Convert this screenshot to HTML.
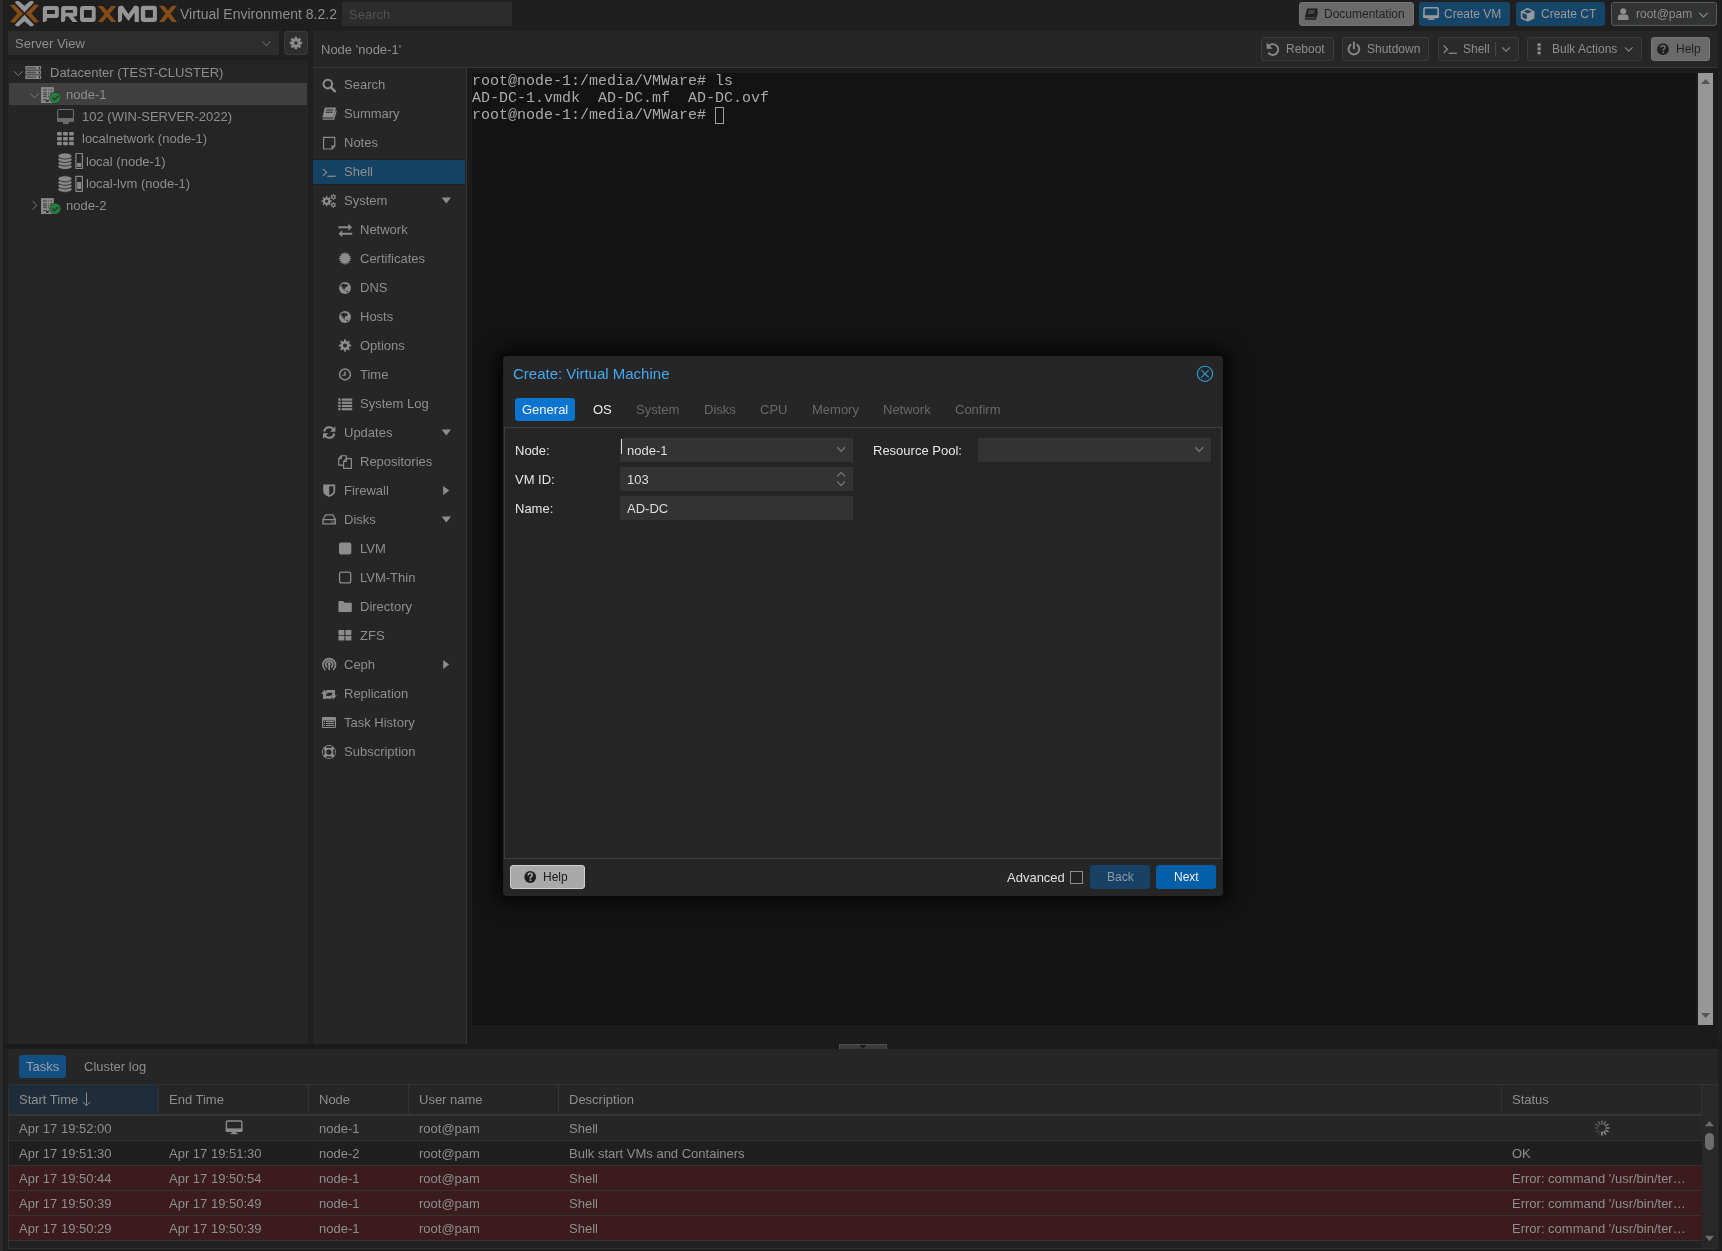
<!DOCTYPE html>
<html><head><meta charset="utf-8"><title>Proxmox</title>
<style>
*{box-sizing:border-box;margin:0;padding:0}
html,body{width:1722px;height:1251px;overflow:hidden;background:#1f1f1f;font-family:"Liberation Sans",sans-serif;font-size:13px;color:#a0a0a0}
.a{position:absolute}
.t{position:absolute;white-space:pre;line-height:15px;will-change:transform}
.s12{font-size:12px}
svg.ov{position:absolute;left:0;top:0;width:1722px;height:1251px;overflow:visible}
</style></head><body>
<div class="a" style="left:0px;top:0px;width:3px;height:1251px;background:#2a2a2a;"></div>
<div class="a" style="left:342px;top:2px;width:170px;height:24px;background:#2c2c2c;"></div>
<div class="t" style="left:349px;top:7px;color:#525252;">Search</div>
<div class="t" style="left:180px;top:6px;color:#8e8e8e;font-size:14px;line-height:16px;">Virtual Environment 8.2.2</div>
<div class="a" style="left:1299px;top:2px;width:115px;height:24px;background:#6a6a6a;border-radius:3px;border:1px solid #727272;"></div>
<div class="t" style="left:1324px;top:7px;color:#222;font-size:12px;">Documentation</div>
<div class="a" style="left:1419px;top:2px;width:91px;height:24px;background:#154569;border-radius:3px;"></div>
<div class="t" style="left:1444px;top:7px;color:#999999;font-size:12px;">Create VM</div>
<div class="a" style="left:1516px;top:2px;width:89px;height:24px;background:#154569;border-radius:3px;"></div>
<div class="t" style="left:1541px;top:7px;color:#999999;font-size:12px;">Create CT</div>
<div class="a" style="left:1611px;top:2px;width:106px;height:24px;background:#323333;border-radius:3px;border:1px solid #575b5b;"></div>
<div class="t" style="left:1636px;top:7px;color:#8e8e8e;font-size:12px;">root@pam</div>
<div class="a" style="left:8px;top:31px;width:271px;height:24px;background:#2d2d2d;"></div>
<div class="t" style="left:15px;top:36px;color:#8e8e8e;">Server View</div>
<div class="a" style="left:284px;top:31px;width:24px;height:24px;background:#2e2e2e;border:1px solid #3a3a3a;border-radius:3px;"></div>
<div class="a" style="left:8px;top:60px;width:300px;height:984px;background:#252525;"></div>
<div class="a" style="left:9px;top:83px;width:298px;height:22px;background:#404040;"></div>
<div class="t" style="left:50px;top:65px;color:#8e8e8e;">Datacenter (TEST-CLUSTER)</div>
<div class="t" style="left:66px;top:87px;color:#8e8e8e;">node-1</div>
<div class="t" style="left:82px;top:109px;color:#8e8e8e;">102 (WIN-SERVER-2022)</div>
<div class="t" style="left:82px;top:131px;color:#8e8e8e;">localnetwork (node-1)</div>
<div class="t" style="left:86px;top:154px;color:#8e8e8e;">local (node-1)</div>
<div class="t" style="left:86px;top:176px;color:#8e8e8e;">local-lvm (node-1)</div>
<div class="t" style="left:66px;top:198px;color:#8e8e8e;">node-2</div>
<div class="a" style="left:313px;top:31px;width:1405px;height:37px;background:#262626;border-bottom:1px solid #383838;"></div>
<div class="t" style="left:321px;top:42px;color:#8e8e8e;">Node 'node-1'</div>
<div class="a" style="left:1261px;top:37px;width:73px;height:24px;background:#2b2b2b;border:1px solid #3c3c3c;border-radius:3px;"></div>
<div class="t" style="left:1286px;top:42px;color:#8e8e8e;font-size:12px;">Reboot</div>
<div class="a" style="left:1342px;top:37px;width:87px;height:24px;background:#2b2b2b;border:1px solid #3c3c3c;border-radius:3px;"></div>
<div class="t" style="left:1367px;top:42px;color:#8e8e8e;font-size:12px;">Shutdown</div>
<div class="a" style="left:1438px;top:37px;width:81px;height:24px;background:#2b2b2b;border:1px solid #3c3c3c;border-radius:3px;"></div>
<div class="t" style="left:1463px;top:42px;color:#8e8e8e;font-size:12px;">Shell</div>
<div class="a" style="left:1495px;top:42px;width:1px;height:14px;background:#444;"></div>
<div class="a" style="left:1527px;top:37px;width:115px;height:24px;background:#2b2b2b;border:1px solid #3c3c3c;border-radius:3px;"></div>
<div class="t" style="left:1552px;top:42px;color:#8e8e8e;font-size:12px;">Bulk Actions</div>
<div class="a" style="left:1651px;top:37px;width:59px;height:24px;background:#6a6a6a;border:1px solid #767676;border-radius:3px;"></div>
<div class="t" style="left:1676px;top:42px;color:#222222;font-size:12px;">Help</div>
<div class="a" style="left:313px;top:68px;width:154px;height:976px;background:#262626;border-right:1px solid #353535;"></div>
<div class="a" style="left:467px;top:68px;width:1251px;height:976px;background:#1b1b1b;"></div>
<div class="a" style="left:472px;top:73px;width:1224px;height:952px;background:#131313;"></div>
<div class="a" style="left:1698px;top:73px;width:15px;height:952px;background:#979797;"></div>
<div class="a" style="left:313px;top:159px;width:152px;height:1px;background:#1f1f1f;"></div>
<div class="a" style="left:313px;top:160px;width:152px;height:24px;background:#134265;"></div>
<div class="a" style="left:313px;top:184px;width:152px;height:1px;background:#1f1f1f;"></div>
<div class="t" style="left:344px;top:77px;color:#8e8e8e;">Search</div>
<div class="t" style="left:344px;top:106px;color:#8e8e8e;">Summary</div>
<div class="t" style="left:344px;top:135px;color:#8e8e8e;">Notes</div>
<div class="t" style="left:344px;top:164px;color:#8e8e8e;">Shell</div>
<div class="t" style="left:344px;top:193px;color:#8e8e8e;">System</div>
<div class="t" style="left:360px;top:222px;color:#8e8e8e;">Network</div>
<div class="t" style="left:360px;top:251px;color:#8e8e8e;">Certificates</div>
<div class="t" style="left:360px;top:280px;color:#8e8e8e;">DNS</div>
<div class="t" style="left:360px;top:309px;color:#8e8e8e;">Hosts</div>
<div class="t" style="left:360px;top:338px;color:#8e8e8e;">Options</div>
<div class="t" style="left:360px;top:367px;color:#8e8e8e;">Time</div>
<div class="t" style="left:360px;top:396px;color:#8e8e8e;">System Log</div>
<div class="t" style="left:344px;top:425px;color:#8e8e8e;">Updates</div>
<div class="t" style="left:360px;top:454px;color:#8e8e8e;">Repositories</div>
<div class="t" style="left:344px;top:483px;color:#8e8e8e;">Firewall</div>
<div class="t" style="left:344px;top:512px;color:#8e8e8e;">Disks</div>
<div class="t" style="left:360px;top:541px;color:#8e8e8e;">LVM</div>
<div class="t" style="left:360px;top:570px;color:#8e8e8e;">LVM-Thin</div>
<div class="t" style="left:360px;top:599px;color:#8e8e8e;">Directory</div>
<div class="t" style="left:360px;top:628px;color:#8e8e8e;">ZFS</div>
<div class="t" style="left:344px;top:657px;color:#8e8e8e;">Ceph</div>
<div class="t" style="left:344px;top:686px;color:#8e8e8e;">Replication</div>
<div class="t" style="left:344px;top:715px;color:#8e8e8e;">Task History</div>
<div class="t" style="left:344px;top:744px;color:#8e8e8e;">Subscription</div>
<div class="t" style="left:472px;top:73px;font-family:'Liberation Mono',monospace;font-size:15px;line-height:17px;color:#aaaaaa">root@node-1:/media/VMWare# ls</div>
<div class="t" style="left:472px;top:90px;font-family:'Liberation Mono',monospace;font-size:15px;line-height:17px;color:#aaaaaa">AD-DC-1.vmdk  AD-DC.mf  AD-DC.ovf</div>
<div class="t" style="left:472px;top:107px;font-family:'Liberation Mono',monospace;font-size:15px;line-height:17px;color:#aaaaaa">root@node-1:/media/VMWare# </div>
<div class="a" style="left:715px;top:107px;width:9px;height:17px;background:transparent;border:1px solid #a0a0a0;"></div>
<div class="a" style="left:3px;top:1044px;width:1719px;height:5px;background:#1b1b1b;"></div>
<div class="a" style="left:8px;top:1049px;width:1710px;height:200px;background:#262626;"></div>
<div class="a" style="left:19px;top:1055px;width:47px;height:23px;background:#134f80;border-radius:3px;"></div>
<div class="t" style="left:26px;top:1059px;color:#93a0ac;">Tasks</div>
<div class="t" style="left:84px;top:1059px;color:#8e8e8e;">Cluster log</div>
<div class="a" style="left:8px;top:1084px;width:1710px;height:165px;background:#212121;border:1px solid #303030;"></div>
<div class="a" style="left:9px;top:1085px;width:1708px;height:29px;background:#262626;"></div>
<div class="a" style="left:9px;top:1085px;width:149px;height:29px;background:#1f2d3a;"></div>
<div class="a" style="left:9px;top:1114px;width:1693px;height:2px;background:#353535;"></div>
<div class="a" style="left:158px;top:1085px;width:1px;height:29px;background:#333;"></div>
<div class="a" style="left:308px;top:1085px;width:1px;height:29px;background:#333;"></div>
<div class="a" style="left:408px;top:1085px;width:1px;height:29px;background:#333;"></div>
<div class="a" style="left:558px;top:1085px;width:1px;height:29px;background:#333;"></div>
<div class="a" style="left:1501px;top:1085px;width:1px;height:29px;background:#333;"></div>
<div class="a" style="left:1701px;top:1085px;width:1px;height:29px;background:#333;"></div>
<div class="t" style="left:19px;top:1092px;color:#8e8e8e;">Start Time</div>
<div class="t" style="left:169px;top:1092px;color:#8e8e8e;">End Time</div>
<div class="t" style="left:319px;top:1092px;color:#8e8e8e;">Node</div>
<div class="t" style="left:419px;top:1092px;color:#8e8e8e;">User name</div>
<div class="t" style="left:569px;top:1092px;color:#8e8e8e;">Description</div>
<div class="t" style="left:1512px;top:1092px;color:#8e8e8e;">Status</div>
<div class="a" style="left:9px;top:1116px;width:1693px;height:24px;background:#262626;"></div>
<div class="a" style="left:9px;top:1140px;width:1693px;height:1px;background:#333;"></div>
<div class="t" style="left:19px;top:1121px;color:#8e8e8e;">Apr 17 19:52:00</div>
<div class="t" style="left:319px;top:1121px;color:#8e8e8e;">node-1</div>
<div class="t" style="left:419px;top:1121px;color:#8e8e8e;">root@pam</div>
<div class="t" style="left:569px;top:1121px;color:#8e8e8e;">Shell</div>
<div class="a" style="left:9px;top:1141px;width:1693px;height:24px;background:#1f1f1f;"></div>
<div class="a" style="left:9px;top:1165px;width:1693px;height:1px;background:#333;"></div>
<div class="t" style="left:19px;top:1146px;color:#8e8e8e;">Apr 17 19:51:30</div>
<div class="t" style="left:169px;top:1146px;color:#8e8e8e;">Apr 17 19:51:30</div>
<div class="t" style="left:319px;top:1146px;color:#8e8e8e;">node-2</div>
<div class="t" style="left:419px;top:1146px;color:#8e8e8e;">root@pam</div>
<div class="t" style="left:569px;top:1146px;color:#8e8e8e;">Bulk start VMs and Containers</div>
<div class="t" style="left:1512px;top:1146px;color:#8e8e8e;">OK</div>
<div class="a" style="left:9px;top:1166px;width:1693px;height:24px;background:#3b1b1d;"></div>
<div class="a" style="left:9px;top:1190px;width:1693px;height:1px;background:#333;"></div>
<div class="t" style="left:19px;top:1171px;color:#8e8e8e;">Apr 17 19:50:44</div>
<div class="t" style="left:169px;top:1171px;color:#8e8e8e;">Apr 17 19:50:54</div>
<div class="t" style="left:319px;top:1171px;color:#8e8e8e;">node-1</div>
<div class="t" style="left:419px;top:1171px;color:#8e8e8e;">root@pam</div>
<div class="t" style="left:569px;top:1171px;color:#8e8e8e;">Shell</div>
<div class="t" style="left:1512px;top:1171px;color:#8e8e8e;">Error: command '/usr/bin/ter…</div>
<div class="a" style="left:9px;top:1191px;width:1693px;height:24px;background:#3b1b1d;"></div>
<div class="a" style="left:9px;top:1215px;width:1693px;height:1px;background:#333;"></div>
<div class="t" style="left:19px;top:1196px;color:#8e8e8e;">Apr 17 19:50:39</div>
<div class="t" style="left:169px;top:1196px;color:#8e8e8e;">Apr 17 19:50:49</div>
<div class="t" style="left:319px;top:1196px;color:#8e8e8e;">node-1</div>
<div class="t" style="left:419px;top:1196px;color:#8e8e8e;">root@pam</div>
<div class="t" style="left:569px;top:1196px;color:#8e8e8e;">Shell</div>
<div class="t" style="left:1512px;top:1196px;color:#8e8e8e;">Error: command '/usr/bin/ter…</div>
<div class="a" style="left:9px;top:1216px;width:1693px;height:24px;background:#3b1b1d;"></div>
<div class="a" style="left:9px;top:1240px;width:1693px;height:1px;background:#333;"></div>
<div class="t" style="left:19px;top:1221px;color:#8e8e8e;">Apr 17 19:50:29</div>
<div class="t" style="left:169px;top:1221px;color:#8e8e8e;">Apr 17 19:50:39</div>
<div class="t" style="left:319px;top:1221px;color:#8e8e8e;">node-1</div>
<div class="t" style="left:419px;top:1221px;color:#8e8e8e;">root@pam</div>
<div class="t" style="left:569px;top:1221px;color:#8e8e8e;">Shell</div>
<div class="t" style="left:1512px;top:1221px;color:#8e8e8e;">Error: command '/usr/bin/ter…</div>
<div class="a" style="left:1702px;top:1085px;width:15px;height:163px;background:#282828;"></div>

<svg class="ov" viewBox="0 0 1722 1251"><polygon fill="#959595" points="14.9,2.4 16.3,1.0 18.7,1.0 24.45,5.8 30.2,1.0 32.6,1.0 34,2.4 24.45,12.5"/><polygon fill="#959595" points="14.9,24.8 16.3,26.2 18.7,26.2 24.45,21.2 30.2,26.2 32.6,26.2 34,24.8 24.45,14.8"/><polygon fill="#874b16" stroke="#1f1f1f" stroke-width="0.7" points="9.6,5.2 14.2,3.9 23.5,13.6 14.2,23.2 9.6,21.9 17,13.6"/><polygon fill="#874b16" stroke="#1f1f1f" stroke-width="0.7" points="39.3,5.2 34.7,3.9 25.4,13.6 34.7,23.2 39.3,21.9 31.9,13.6"/><path fill="#959595" fill-rule="evenodd" d="M42.8,22 L42.8,8.6 Q42.8,5.9 45.5,5.9 L56.1,5.9 Q58.8,5.9 58.8,8.6 L58.8,15.3 Q58.8,18 56.1,18 L47,18 L47,19.8 Q46.6,22 44.4,22 Z M47,9.9 L54.9,9.9 L54.9,13.9 L47,13.9 Z"/><path fill="#959595" fill-rule="evenodd" d="M61.1,22 L61.1,8.6 Q61.1,5.9 63.8,5.9 L74.5,5.9 Q77.2,5.9 77.2,8.6 L77.2,13.9 Q77.2,16.6 74.5,16.6 L73.2,16.6 L77.4,22 L72.6,22 L68.4,16.6 L65.3,16.6 L65.3,19.8 Q64.9,22 62.7,22 Z M65.3,10.1 L73,10.1 L73,12.7 L65.3,12.7 Z"/><path fill="#959595" fill-rule="evenodd" d="M83,5.9 L92.7,5.9 Q95.7,5.9 95.7,8.9 L95.7,19 Q95.7,22 92.7,22 L83,22 Q80,22 80,19 L80,8.9 Q80,5.9 83,5.9 Z M83.9,10.1 L91.8,10.1 L91.8,17.8 L83.9,17.8 Z"/><polygon fill="#874b16" points="97.8,5.9 102.8,5.9 107,10.8 111.2,5.9 116.2,5.9 109.5,13.95 116.2,22 111.2,22 107,17.1 102.8,22 97.8,22 104.5,13.95"/><path fill="#959595" d="M118,21.9 L118,8.6 Q118,5.8 120.8,5.8 L122.8,5.8 L128.5,14 L134.2,5.8 L136.1,5.8 Q138.9,5.8 138.9,8.6 L138.9,21.9 L134.6,21.9 L134.6,12.5 L128.5,20.9 L122.1,12.5 L122.1,19.8 Q121.7,21.9 119.6,21.9 Z"/><path fill="#959595" fill-rule="evenodd" d="M143.8,5.8 L153.9,5.8 Q156.9,5.8 156.9,8.8 L156.9,18.9 Q156.9,21.9 153.9,21.9 L143.8,21.9 Q140.8,21.9 140.8,18.9 L140.8,8.8 Q140.8,5.8 143.8,5.8 Z M145.2,10 L152.9,10 L152.9,17.7 L145.2,17.7 Z"/><polygon fill="#874b16" points="159,5.8 164,5.8 168,10.7 172,5.8 177,5.8 170.5,13.85 177,21.9 172,21.9 168,17 164,21.9 159,21.9 165.5,13.85"/><path fill="#1e1e1e" d="M1307.2,8.6 L1317.8,8.6 L1315.2,17.6 L1304.8,17.6 Z"/><path fill="none" stroke="#1e1e1e" stroke-width="1.3" d="M1305,19 L1315.5,19 L1317.6,11.5"/><path fill="#6a6a6a" d="M1308.6,10.6 h6.4 l-0.3,1 h-6.4z M1308.1,12.6 h6.4 l-0.3,1 h-6.4z"/><rect x="1424" y="7.8" width="14.2" height="9.6" rx="1.2" fill="none" stroke="#999999" stroke-width="1.6"/><rect x="1423.2" y="15.2" width="15.8" height="2.6" fill="#999999"/><rect x="1429.5" y="17.6" width="3.2" height="1.6" fill="#999999"/><rect x="1427.6" y="18.6" width="7" height="1.2" fill="#999999"/><path fill="none" stroke="#999999" stroke-width="1.6" stroke-linejoin="round" d="M1527.6,8.8 L1533.6,11.6 L1533.6,18 L1527.6,20.8 L1521.6,18 L1521.6,11.6 Z M1521.6,11.6 L1527.6,14.4 L1533.6,11.6 M1527.6,14.4 L1527.6,20.8"/><path fill="#999999" d="M1527.6,14.4 L1533.6,11.6 L1533.6,18 L1527.6,20.8 Z"/><circle cx="1623.2" cy="11.2" r="3" fill="#8c8c8c"/><path fill="#8c8c8c" d="M1617.8,20 L1617.8,18 Q1617.8,14.6 1621,14.6 L1625.4,14.6 Q1628.6,14.6 1628.6,18 L1628.6,20 Z"/><path fill="none" stroke="#8c8c8c" stroke-width="1.1" d="M1699.2,12.8 L1703.5,17 L1707.8,12.8"/><path fill="none" stroke="#5e5e5e" stroke-width="1.1" d="M262.2,41.4 L266.4,45.6 L270.6,41.4"/><g transform="translate(295.9,43)"><circle r="4.6" fill="#8c8c8c"/><circle r="1.8" fill="#2e2e2e"/><rect x="-1.3" y="-6.2" width="2.6" height="3" fill="#8c8c8c" transform="rotate(0)"/><rect x="-1.3" y="-6.2" width="2.6" height="3" fill="#8c8c8c" transform="rotate(45)"/><rect x="-1.3" y="-6.2" width="2.6" height="3" fill="#8c8c8c" transform="rotate(90)"/><rect x="-1.3" y="-6.2" width="2.6" height="3" fill="#8c8c8c" transform="rotate(135)"/><rect x="-1.3" y="-6.2" width="2.6" height="3" fill="#8c8c8c" transform="rotate(180)"/><rect x="-1.3" y="-6.2" width="2.6" height="3" fill="#8c8c8c" transform="rotate(225)"/><rect x="-1.3" y="-6.2" width="2.6" height="3" fill="#8c8c8c" transform="rotate(270)"/><rect x="-1.3" y="-6.2" width="2.6" height="3" fill="#8c8c8c" transform="rotate(315)"/></g><path fill="none" stroke="#7a7a7a" stroke-width="1" d="M14,71.2 L18.3,75.6 L22.6,71.2"/><rect x="25.3" y="66" width="15.8" height="3.8" rx="0.6" fill="#888888"/><rect x="26.4" y="67.2" width="9.6" height="1.4" rx="0.5" fill="#4a4a4a"/><rect x="38.8" y="66.9" width="1.3" height="2" rx="0.6" fill="#222"/><rect x="25.3" y="70.6" width="15.8" height="3.8" rx="0.6" fill="#888888"/><rect x="26.4" y="71.8" width="9.6" height="1.4" rx="0.5" fill="#4a4a4a"/><rect x="38.8" y="71.5" width="1.3" height="2" rx="0.6" fill="#222"/><rect x="25.3" y="75.2" width="15.8" height="3.8" rx="0.6" fill="#888888"/><rect x="26.4" y="76.4" width="9.6" height="1.4" rx="0.5" fill="#4a4a4a"/><rect x="38.8" y="76.10000000000001" width="1.3" height="2" rx="0.6" fill="#222"/><path fill="none" stroke="#7a7a7a" stroke-width="1" d="M30.2,93.4 L34.5,97.8 L38.8,93.4"/><path fill="none" stroke="#7a7a7a" stroke-width="1" d="M32.6,201 L36.8,205.3 L32.6,209.6"/><rect x="41" y="87.1" width="12.9" height="15.9" fill="#888888"/><rect x="43.1" y="89.3" width="3.8" height="1.2" fill="#4a4a4a"/><rect x="48.2" y="89.3" width="0.8" height="1.2" fill="#4a4a4a"/><rect x="50.3" y="89.3" width="1.7" height="1.2" fill="#4a4a4a"/><rect x="43.1" y="92.19999999999999" width="3.8" height="1.2" fill="#4a4a4a"/><rect x="48.2" y="92.19999999999999" width="0.8" height="1.2" fill="#4a4a4a"/><rect x="50.3" y="92.19999999999999" width="1.7" height="1.2" fill="#4a4a4a"/><rect x="43.1" y="94.0" width="3.8" height="1.2" fill="#4a4a4a"/><rect x="48.2" y="94.0" width="0.8" height="1.2" fill="#4a4a4a"/><rect x="50.3" y="94.0" width="1.7" height="1.2" fill="#4a4a4a"/><rect x="43.1" y="96.0" width="3.8" height="1.2" fill="#4a4a4a"/><rect x="48.2" y="96.0" width="0.8" height="1.2" fill="#4a4a4a"/><rect x="50.3" y="96.0" width="1.7" height="1.2" fill="#4a4a4a"/><rect x="43.1" y="99.0" width="3.8" height="1.2" fill="#4a4a4a"/><rect x="48.2" y="99.0" width="0.8" height="1.2" fill="#4a4a4a"/><rect x="50.3" y="99.0" width="1.7" height="1.2" fill="#4a4a4a"/><rect x="46" y="100.1" width="2.7" height="1.8" fill="#2a2a2a"/><circle cx="55.2" cy="97.69999999999999" r="5.9" fill="#2a2a2a" opacity="0.8"/><circle cx="55.2" cy="97.69999999999999" r="5.3" fill="#21803c"/><path fill="none" stroke="#333" stroke-width="1.5" d="M52.3,97.5 L54.4,99.69999999999999 L58.4,95.89999999999999"/><rect x="41" y="198.1" width="12.9" height="15.9" fill="#888888"/><rect x="43.1" y="200.29999999999998" width="3.8" height="1.2" fill="#4a4a4a"/><rect x="48.2" y="200.29999999999998" width="0.8" height="1.2" fill="#4a4a4a"/><rect x="50.3" y="200.29999999999998" width="1.7" height="1.2" fill="#4a4a4a"/><rect x="43.1" y="203.2" width="3.8" height="1.2" fill="#4a4a4a"/><rect x="48.2" y="203.2" width="0.8" height="1.2" fill="#4a4a4a"/><rect x="50.3" y="203.2" width="1.7" height="1.2" fill="#4a4a4a"/><rect x="43.1" y="205.0" width="3.8" height="1.2" fill="#4a4a4a"/><rect x="48.2" y="205.0" width="0.8" height="1.2" fill="#4a4a4a"/><rect x="50.3" y="205.0" width="1.7" height="1.2" fill="#4a4a4a"/><rect x="43.1" y="207.0" width="3.8" height="1.2" fill="#4a4a4a"/><rect x="48.2" y="207.0" width="0.8" height="1.2" fill="#4a4a4a"/><rect x="50.3" y="207.0" width="1.7" height="1.2" fill="#4a4a4a"/><rect x="43.1" y="210.0" width="3.8" height="1.2" fill="#4a4a4a"/><rect x="48.2" y="210.0" width="0.8" height="1.2" fill="#4a4a4a"/><rect x="50.3" y="210.0" width="1.7" height="1.2" fill="#4a4a4a"/><rect x="46" y="211.1" width="2.7" height="1.8" fill="#2a2a2a"/><circle cx="55.2" cy="208.7" r="5.9" fill="#2a2a2a" opacity="0.8"/><circle cx="55.2" cy="208.7" r="5.3" fill="#21803c"/><path fill="none" stroke="#333" stroke-width="1.5" d="M52.3,208.5 L54.4,210.7 L58.4,206.9"/><rect x="57.65" y="109.55" width="15.8" height="11.6" rx="1.1" fill="none" stroke="#707070" stroke-width="1.1"/><rect x="57.1" y="118" width="16.9" height="3.7" rx="0.6" fill="#6c6c6c"/><rect x="62.8" y="121.7" width="5.9" height="2.2" rx="0.5" fill="#6c6c6c"/><rect x="57.1" y="132.1" width="4.7" height="3.5" rx="0.6" fill="#8a8a8a"/><rect x="63.1" y="132.1" width="4.7" height="3.5" rx="0.6" fill="#8a8a8a"/><rect x="69.1" y="132.1" width="4.7" height="3.5" rx="0.6" fill="#8a8a8a"/><rect x="57.1" y="136.9" width="4.7" height="3.5" rx="0.6" fill="#8a8a8a"/><rect x="63.1" y="136.9" width="4.7" height="3.5" rx="0.6" fill="#8a8a8a"/><rect x="69.1" y="136.9" width="4.7" height="3.5" rx="0.6" fill="#8a8a8a"/><rect x="57.1" y="141.7" width="4.7" height="3.5" rx="0.6" fill="#8a8a8a"/><rect x="63.1" y="141.7" width="4.7" height="3.5" rx="0.6" fill="#8a8a8a"/><rect x="69.1" y="141.7" width="4.7" height="3.5" rx="0.6" fill="#8a8a8a"/><ellipse cx="65" cy="166.50" rx="7.1" ry="3.0" fill="#888888" stroke="#262626" stroke-width="0.8"/><ellipse cx="65" cy="163.00" rx="7.1" ry="3.0" fill="#888888" stroke="#262626" stroke-width="0.8"/><ellipse cx="65" cy="159.50" rx="7.1" ry="3.0" fill="#888888" stroke="#262626" stroke-width="0.8"/><ellipse cx="65" cy="156.00" rx="7.1" ry="3.0" fill="#888888" stroke="#262626" stroke-width="0.8"/><rect x="75.9" y="153.50" width="6.5" height="15" rx="0.3" fill="none" stroke="#888888" stroke-width="1.2"/><rect x="77.1" y="163.00" width="4.1" height="4.00" fill="#888888"/><ellipse cx="65" cy="189.30" rx="7.1" ry="3.0" fill="#888888" stroke="#262626" stroke-width="0.8"/><ellipse cx="65" cy="185.80" rx="7.1" ry="3.0" fill="#888888" stroke="#262626" stroke-width="0.8"/><ellipse cx="65" cy="182.30" rx="7.1" ry="3.0" fill="#888888" stroke="#262626" stroke-width="0.8"/><ellipse cx="65" cy="178.80" rx="7.1" ry="3.0" fill="#888888" stroke="#262626" stroke-width="0.8"/><rect x="75.9" y="176.30" width="6.5" height="15" rx="0.3" fill="none" stroke="#888888" stroke-width="1.2"/><rect x="77.1" y="182.00" width="4.1" height="7.00" fill="#888888"/><circle cx="327.8" cy="84.1" r="4.3" fill="none" stroke="#8c8c8c" stroke-width="2"/><path d="M330.8,87.1 L335,91.3" stroke="#8c8c8c" stroke-width="2.4" stroke-linecap="round"/><path fill="#8c8c8c" d="M324.8,107.5 L336,107.5 L333.6,117.5 L322.4,117.5 Z"/><path fill="none" stroke="#8c8c8c" stroke-width="1.2" d="M322.6,119.1 L333.8,119.1 L336.2,110.5"/><path fill="#262626" d="M326.4,109.5 h6.8 l-0.3,1 h-6.8z M325.9,111.7 h6.8 l-0.3,1 h-6.8z"/><path fill="none" stroke="#8c8c8c" stroke-width="1.2" stroke-linejoin="round" d="M323.6,137.4 L334.8,137.4 L334.8,146.2 L332,149 L323.6,149 Z M334.8,146.2 L332,146.2 L332,149"/><path fill="none" stroke="#8c8c8c" stroke-width="1.2" d="M322.8,168.9 L326.6,172.4 L322.8,175.9"/><rect x="327.4" y="175.6" width="8.2" height="1.3" fill="#8c8c8c"/><g transform="translate(326.6,201.1)"><circle r="3.7" fill="#8c8c8c"/><rect x="-0.73" y="-5.20" width="1.45" height="2.50" fill="#8c8c8c" transform="rotate(0.0)"/><rect x="-0.73" y="-5.20" width="1.45" height="2.50" fill="#8c8c8c" transform="rotate(45.0)"/><rect x="-0.73" y="-5.20" width="1.45" height="2.50" fill="#8c8c8c" transform="rotate(90.0)"/><rect x="-0.73" y="-5.20" width="1.45" height="2.50" fill="#8c8c8c" transform="rotate(135.0)"/><rect x="-0.73" y="-5.20" width="1.45" height="2.50" fill="#8c8c8c" transform="rotate(180.0)"/><rect x="-0.73" y="-5.20" width="1.45" height="2.50" fill="#8c8c8c" transform="rotate(225.0)"/><rect x="-0.73" y="-5.20" width="1.45" height="2.50" fill="#8c8c8c" transform="rotate(270.0)"/><rect x="-0.73" y="-5.20" width="1.45" height="2.50" fill="#8c8c8c" transform="rotate(315.0)"/><circle r="1.6" fill="#262626"/></g><g transform="translate(333.4,197.0)"><circle r="2.0" fill="#8c8c8c"/><rect x="-0.52" y="-2.90" width="1.05" height="1.90" fill="#8c8c8c" transform="rotate(0.0)"/><rect x="-0.52" y="-2.90" width="1.05" height="1.90" fill="#8c8c8c" transform="rotate(60.0)"/><rect x="-0.52" y="-2.90" width="1.05" height="1.90" fill="#8c8c8c" transform="rotate(120.0)"/><rect x="-0.52" y="-2.90" width="1.05" height="1.90" fill="#8c8c8c" transform="rotate(180.0)"/><rect x="-0.52" y="-2.90" width="1.05" height="1.90" fill="#8c8c8c" transform="rotate(240.0)"/><rect x="-0.52" y="-2.90" width="1.05" height="1.90" fill="#8c8c8c" transform="rotate(300.0)"/><circle r="0.9" fill="#262626"/></g><g transform="translate(333.4,204.9)"><circle r="2.0" fill="#8c8c8c"/><rect x="-0.52" y="-2.90" width="1.05" height="1.90" fill="#8c8c8c" transform="rotate(0.0)"/><rect x="-0.52" y="-2.90" width="1.05" height="1.90" fill="#8c8c8c" transform="rotate(60.0)"/><rect x="-0.52" y="-2.90" width="1.05" height="1.90" fill="#8c8c8c" transform="rotate(120.0)"/><rect x="-0.52" y="-2.90" width="1.05" height="1.90" fill="#8c8c8c" transform="rotate(180.0)"/><rect x="-0.52" y="-2.90" width="1.05" height="1.90" fill="#8c8c8c" transform="rotate(240.0)"/><rect x="-0.52" y="-2.90" width="1.05" height="1.90" fill="#8c8c8c" transform="rotate(300.0)"/><circle r="0.9" fill="#262626"/></g><path fill="#8c8c8c" d="M338.4,226.3 h10 v-2.6 l3.6,3.6 l-3.6,3.6 v-2.6 h-10 z"/><path fill="#8c8c8c" d="M352.2,232.7 h-10 v-2.6 l-3.6,3.6 l3.6,3.6 v-2.6 h10 z"/><g transform="translate(345,258.5)"><circle r="5.0" fill="#8c8c8c"/><rect x="-0.49" y="-6.20" width="0.98" height="2.20" fill="#8c8c8c" transform="rotate(0.0)"/><rect x="-0.49" y="-6.20" width="0.98" height="2.20" fill="#8c8c8c" transform="rotate(22.5)"/><rect x="-0.49" y="-6.20" width="0.98" height="2.20" fill="#8c8c8c" transform="rotate(45.0)"/><rect x="-0.49" y="-6.20" width="0.98" height="2.20" fill="#8c8c8c" transform="rotate(67.5)"/><rect x="-0.49" y="-6.20" width="0.98" height="2.20" fill="#8c8c8c" transform="rotate(90.0)"/><rect x="-0.49" y="-6.20" width="0.98" height="2.20" fill="#8c8c8c" transform="rotate(112.5)"/><rect x="-0.49" y="-6.20" width="0.98" height="2.20" fill="#8c8c8c" transform="rotate(135.0)"/><rect x="-0.49" y="-6.20" width="0.98" height="2.20" fill="#8c8c8c" transform="rotate(157.5)"/><rect x="-0.49" y="-6.20" width="0.98" height="2.20" fill="#8c8c8c" transform="rotate(180.0)"/><rect x="-0.49" y="-6.20" width="0.98" height="2.20" fill="#8c8c8c" transform="rotate(202.5)"/><rect x="-0.49" y="-6.20" width="0.98" height="2.20" fill="#8c8c8c" transform="rotate(225.0)"/><rect x="-0.49" y="-6.20" width="0.98" height="2.20" fill="#8c8c8c" transform="rotate(247.5)"/><rect x="-0.49" y="-6.20" width="0.98" height="2.20" fill="#8c8c8c" transform="rotate(270.0)"/><rect x="-0.49" y="-6.20" width="0.98" height="2.20" fill="#8c8c8c" transform="rotate(292.5)"/><rect x="-0.49" y="-6.20" width="0.98" height="2.20" fill="#8c8c8c" transform="rotate(315.0)"/><rect x="-0.49" y="-6.20" width="0.98" height="2.20" fill="#8c8c8c" transform="rotate(337.5)"/><circle r="0.01" fill="#8c8c8c"/></g><circle cx="345" cy="288.0" r="5.95" fill="#8c8c8c"/><path fill="#262626" d="M341.2,284.8 Q342.4,283.4 344.6,283.7 L345.6,284.8 L346.4,283.9 Q347.6,284.4 348,285.4 L346.6,287.0 L345.2,287.6 L344.4,289.4 L343.6,289.0 Q343,287.2 341.8,286.4 Z"/><path fill="#262626" d="M346.2,291.8 L347.4,290.8 L348.3,291.2 L347.2,292.6 Z"/><path fill="none" stroke="#262626" stroke-width="0.6" d="M340.6,285.4 Q341.4,287.4 343.6,289.6 Q344.8,290.2 345.6,290.8"/><circle cx="345" cy="317.0" r="5.95" fill="#8c8c8c"/><path fill="#262626" d="M341.2,313.8 Q342.4,312.4 344.6,312.7 L345.6,313.8 L346.4,312.9 Q347.6,313.4 348,314.4 L346.6,316.0 L345.2,316.6 L344.4,318.4 L343.6,318.0 Q343,316.2 341.8,315.4 Z"/><path fill="#262626" d="M346.2,320.8 L347.4,319.8 L348.3,320.2 L347.2,321.6 Z"/><path fill="none" stroke="#262626" stroke-width="0.6" d="M340.6,314.4 Q341.4,316.4 343.6,318.6 Q344.8,319.2 345.6,319.8"/><g transform="translate(345,345.5)"><circle r="4.6" fill="#8c8c8c"/><rect x="-0.90" y="-6.20" width="1.81" height="2.60" fill="#8c8c8c" transform="rotate(0.0)"/><rect x="-0.90" y="-6.20" width="1.81" height="2.60" fill="#8c8c8c" transform="rotate(45.0)"/><rect x="-0.90" y="-6.20" width="1.81" height="2.60" fill="#8c8c8c" transform="rotate(90.0)"/><rect x="-0.90" y="-6.20" width="1.81" height="2.60" fill="#8c8c8c" transform="rotate(135.0)"/><rect x="-0.90" y="-6.20" width="1.81" height="2.60" fill="#8c8c8c" transform="rotate(180.0)"/><rect x="-0.90" y="-6.20" width="1.81" height="2.60" fill="#8c8c8c" transform="rotate(225.0)"/><rect x="-0.90" y="-6.20" width="1.81" height="2.60" fill="#8c8c8c" transform="rotate(270.0)"/><rect x="-0.90" y="-6.20" width="1.81" height="2.60" fill="#8c8c8c" transform="rotate(315.0)"/><circle r="2.0" fill="#262626"/></g><circle cx="345" cy="374.5" r="5.4" fill="none" stroke="#8c8c8c" stroke-width="1.5"/><path fill="none" stroke="#8c8c8c" stroke-width="1.4" d="M345,371.5 L345,375.1 L342.4,375.1"/><rect x="338.2" y="398.5" width="2.4" height="2.2" fill="#8c8c8c"/><rect x="341.8" y="398.5" width="10.4" height="2.2" fill="#8c8c8c"/><rect x="338.2" y="401.7" width="2.4" height="2.2" fill="#8c8c8c"/><rect x="341.8" y="401.7" width="10.4" height="2.2" fill="#8c8c8c"/><rect x="338.2" y="404.9" width="2.4" height="2.2" fill="#8c8c8c"/><rect x="341.8" y="404.9" width="10.4" height="2.2" fill="#8c8c8c"/><rect x="338.2" y="408.1" width="2.4" height="2.2" fill="#8c8c8c"/><rect x="341.8" y="408.1" width="10.4" height="2.2" fill="#8c8c8c"/><path fill="none" stroke="#8c8c8c" stroke-width="2" d="M324.2,431.5 A5,5 0 0 1 333.6,429.9"/><path fill="#8c8c8c" d="M335.4,426.3 L335.4,431.7 L330.2,431.7 Z"/><path fill="none" stroke="#8c8c8c" stroke-width="2" d="M334.2,433.5 A5,5 0 0 1 324.8,435.1"/><path fill="#8c8c8c" d="M323,438.7 L323,433.3 L328.2,433.3 Z"/><path fill="none" stroke="#8c8c8c" stroke-width="1.15" stroke-linejoin="round" d="M338.7,458.6 L341.3,455.7 L346.3,455.7 L346.3,465.1 L338.7,465.1 Z M338.7,458.6 L341.3,458.6 L341.3,455.7"/><path fill="#262626" stroke="#8c8c8c" stroke-width="1.15" stroke-linejoin="round" d="M343.6,461.5 L346.3,458.6 L351.4,458.6 L351.4,468.3 L343.6,468.3 Z"/><path fill="none" stroke="#8c8c8c" stroke-width="1.15" d="M343.6,461.5 L346.3,461.5 L346.3,458.6"/><path fill="#8c8c8c" d="M323.2,484.5 L335.2,484.5 L335.2,490.5 Q335.2,495.0 329.2,497.0 Q323.2,495.0 323.2,490.5 Z"/><path fill="#262626" d="M329.2,486.3 L333.4,486.3 L333.4,490.5 Q333.4,493.9 329.2,495.1 Z"/><path fill="none" stroke="#8c8c8c" stroke-width="1.3" d="M323,519.7 L325.6,514.9 L332.8,514.9 L335.4,519.7 L335.4,523.9 L323,523.9 Z M323,519.7 L335.4,519.7"/><rect x="331.4" y="521.3" width="1.2" height="1.2" fill="#8c8c8c"/><rect x="333.2" y="521.3" width="1.2" height="1.2" fill="#8c8c8c"/><rect x="339" y="542.5" width="12.3" height="12" rx="2" fill="#8c8c8c"/><rect x="339.6" y="572.1" width="11.1" height="10.8" rx="2" fill="none" stroke="#8c8c8c" stroke-width="1.3"/><path fill="#8c8c8c" d="M338.4,602.1 Q338.4,600.9 339.6,600.9 L343,600.9 L344.6,602.7 L350.8,602.7 Q351.8,602.7 351.8,603.7 L351.8,610.9 Q351.8,611.9 350.8,611.9 L339.4,611.9 Q338.4,611.9 338.4,610.9 Z"/><rect x="338.4" y="630.1" width="6" height="4.8" rx="0.6" fill="#8c8c8c"/><rect x="338.4" y="635.7" width="6" height="4.8" rx="0.6" fill="#8c8c8c"/><rect x="345.4" y="630.1" width="6" height="4.8" rx="0.6" fill="#8c8c8c"/><rect x="345.4" y="635.7" width="6" height="4.8" rx="0.6" fill="#8c8c8c"/><path fill="none" stroke="#8c8c8c" stroke-width="1.6" d="M325.4,669.9 A6.3,6.3 0 1 1 333,669.9 M327.2,667.5 A3.6,3.6 0 1 1 331.2,667.5"/><circle cx="329.2" cy="663.9" r="1.6" fill="#8c8c8c"/><path d="M329.2,664.5 L329.2,670.1" stroke="#8c8c8c" stroke-width="1.6"/><path fill="#8c8c8c" d="M321.2,694 L324.5,689.7 L327.8,694 Z"/><rect x="323.1" y="693.6" width="2.9" height="5.1" fill="#8c8c8c"/><rect x="323.1" y="695.9" width="8.7" height="2.8" fill="#8c8c8c"/><rect x="326.3" y="690" width="8.7" height="2.7" fill="#8c8c8c"/><rect x="332.1" y="690" width="2.9" height="5.6" fill="#8c8c8c"/><path fill="#8c8c8c" d="M330.3,695.2 L333.55,699.3 L336.8,695.2 Z"/><rect x="322.6" y="717.5" width="12.8" height="10" rx="0.8" fill="none" stroke="#8c8c8c" stroke-width="1.2"/><rect x="322.6" y="717.5" width="12.8" height="3" fill="#8c8c8c"/><rect x="324" y="720.9" width="1.1" height="1.1" fill="#8c8c8c"/><rect x="326" y="720.9" width="8" height="1.1" fill="#8c8c8c"/><rect x="324" y="722.9" width="1.1" height="1.1" fill="#8c8c8c"/><rect x="326" y="722.9" width="8" height="1.1" fill="#8c8c8c"/><rect x="324" y="724.9" width="1.1" height="1.1" fill="#8c8c8c"/><rect x="326" y="724.9" width="8" height="1.1" fill="#8c8c8c"/><circle cx="328.9" cy="752.1" r="4.85" fill="none" stroke="#8c8c8c" stroke-width="4.3"/><rect x="326.1" y="746.1" width="5.6" height="1.7" fill="#262626" transform="rotate(0 328.9 752.1)"/><rect x="326.1" y="746.1" width="5.6" height="1.7" fill="#262626" transform="rotate(90 328.9 752.1)"/><rect x="326.1" y="746.1" width="5.6" height="1.7" fill="#262626" transform="rotate(180 328.9 752.1)"/><rect x="326.1" y="746.1" width="5.6" height="1.7" fill="#262626" transform="rotate(270 328.9 752.1)"/><path fill="#8c8c8c" d="M441.6,197.4 L451,197.4 L446.3,203.4 Z"/><path fill="#8c8c8c" d="M441.6,429.4 L451,429.4 L446.3,435.4 Z"/><path fill="#8c8c8c" d="M441.6,516.4 L451,516.4 L446.3,522.4 Z"/><path fill="#8c8c8c" d="M443.2,485.9 L449.2,490.5 L443.2,495.1 Z"/><path fill="#8c8c8c" d="M443.2,659.9 L449.2,664.5 L443.2,669.1 Z"/><path fill="none" stroke="#888888" stroke-width="1.9" d="M1268.4,46.4 A5.4,5.4 0 1 1 1268.2,52.4"/><path fill="#888888" d="M1266.6,42.6 L1266.6,48.8 L1272.6,48.8 Z"/><path fill="none" stroke="#888888" stroke-width="1.9" stroke-linecap="round" d="M1350.6,44.8 A5.4,5.4 0 1 0 1357.2,44.8"/><path stroke="#888888" stroke-width="1.9" stroke-linecap="round" d="M1353.9,42.4 L1353.9,48.6"/><path fill="none" stroke="#888888" stroke-width="1.3" d="M1443.6,45.4 L1447.4,49.2 L1443.6,53"/><rect x="1448.6" y="52.6" width="8.2" height="1.3" fill="#888888"/><path fill="none" stroke="#888888" stroke-width="1.1" d="M1502.2,47.4 L1506.1,51.2 L1510,47.4"/><rect x="1537.4" y="43.2" width="3.4" height="3" rx="0.7" fill="#888888"/><rect x="1537.4" y="47.300000000000004" width="3.4" height="3" rx="0.7" fill="#888888"/><rect x="1537.4" y="51.400000000000006" width="3.4" height="3" rx="0.7" fill="#888888"/><path fill="none" stroke="#888888" stroke-width="1.1" d="M1625,47.4 L1628.8,51.2 L1632.6,47.4"/><circle cx="1663" cy="49.2" r="5.9" fill="#202020"/><path fill="none" stroke="#6a6a6a" stroke-width="1.6" d="M1661,47.6 Q1661,45.6 1663,45.6 Q1665,45.6 1665,47.4 Q1665,48.6 1663.2,49.6 L1663.2,50.6"/><rect x="1662.3" y="51.6" width="1.8" height="1.6" fill="#6a6a6a"/><path fill="#555" d="M1701,84 L1710.2,84 L1705.6,79 Z"/><path fill="#555" d="M1701,1013 L1710.2,1013 L1705.6,1018 Z"/><rect x="839" y="1044" width="48" height="5" fill="#505050"/><rect x="840" y="1045" width="46" height="4" fill="#3a3a3a"/><path fill="#505050" d="M857.5,1045 L868.5,1045 L863,1049 Z"/><path fill="#1a1a1a" d="M859,1045 L867,1045 L863,1049 Z"/><path fill="none" stroke="#8a8a8a" stroke-width="1" d="M86.5,1092.5 L86.5,1105.6 M82.6,1101.8 L86.5,1105.7 L90.4,1101.8"/><rect x="226.4" y="1121" width="15.4" height="10.2" rx="1" fill="none" stroke="#8a8a8a" stroke-width="1.4"/><rect x="225.8" y="1128.4" width="16.6" height="3.2" fill="#8a8a8a"/><rect x="232.3" y="1131.6" width="3.6" height="1.6" fill="#8a8a8a"/><rect x="230.6" y="1132.8" width="7" height="1.4" fill="#8a8a8a"/><path stroke="#a0a0a0" stroke-opacity="0.55" stroke-width="1.5" d="M1602.00,1124.40 L1602.00,1120.40"/><path stroke="#a0a0a0" stroke-opacity="0.62" stroke-width="1.5" d="M1603.80,1124.88 L1605.80,1121.42"/><path stroke="#a0a0a0" stroke-opacity="0.70" stroke-width="1.5" d="M1605.12,1126.20 L1608.58,1124.20"/><path stroke="#a0a0a0" stroke-opacity="0.78" stroke-width="1.5" d="M1605.60,1128.00 L1609.60,1128.00"/><path stroke="#a0a0a0" stroke-opacity="0.85" stroke-width="1.5" d="M1605.12,1129.80 L1608.58,1131.80"/><path stroke="#a0a0a0" stroke-opacity="0.93" stroke-width="1.5" d="M1603.80,1131.12 L1605.80,1134.58"/><path stroke="#a0a0a0" stroke-opacity="1.00" stroke-width="1.5" d="M1602.00,1131.60 L1602.00,1135.60"/><path stroke="#a0a0a0" stroke-opacity="0.18" stroke-width="1.5" d="M1600.20,1131.12 L1598.20,1134.58"/><path stroke="#a0a0a0" stroke-opacity="0.25" stroke-width="1.5" d="M1598.88,1129.80 L1595.42,1131.80"/><path stroke="#a0a0a0" stroke-opacity="0.32" stroke-width="1.5" d="M1598.40,1128.00 L1594.40,1128.00"/><path stroke="#a0a0a0" stroke-opacity="0.40" stroke-width="1.5" d="M1598.88,1126.20 L1595.42,1124.20"/><path stroke="#a0a0a0" stroke-opacity="0.47" stroke-width="1.5" d="M1600.20,1124.88 L1598.20,1121.42"/><path fill="#6c6c6c" d="M1705,1126.2 L1714,1126.2 L1709.5,1121 Z"/><rect x="1705" y="1133" width="9" height="17" rx="4.5" fill="#6c6c6c"/><path fill="#6c6c6c" d="M1705,1235.8 L1714,1235.8 L1709.5,1241.2 Z"/></svg>
<div class="a" style="left:503px;top:356px;width:720px;height:540px;background:#262626;border-radius:4px;box-shadow:0 0 18px 6px rgba(0,0,0,0.75);"></div>
<div class="t" style="left:513px;top:365px;color:#45a9f0;font-size:15px;line-height:17px;">Create: Virtual Machine</div>
<div class="a" style="left:515px;top:398px;width:60px;height:23px;background:#0a74cf;border-radius:3px;"></div>
<div class="t" style="left:522px;top:402px;color:#f4f4f4;">General</div>
<div class="t" style="left:593px;top:402px;color:#ececec;">OS</div>
<div class="t" style="left:636px;top:402px;color:#686868;">System</div>
<div class="t" style="left:704px;top:402px;color:#686868;">Disks</div>
<div class="t" style="left:760px;top:402px;color:#686868;">CPU</div>
<div class="t" style="left:812px;top:402px;color:#686868;">Memory</div>
<div class="t" style="left:883px;top:402px;color:#686868;">Network</div>
<div class="t" style="left:955px;top:402px;color:#686868;">Confirm</div>
<div class="a" style="left:504px;top:427px;width:718px;height:432px;background:#252525;border:1px solid #3d3d3d;"></div>
<div class="t" style="left:515px;top:443px;color:#e6e6e6;">Node:</div>
<div class="t" style="left:515px;top:472px;color:#e6e6e6;">VM ID:</div>
<div class="t" style="left:515px;top:501px;color:#e6e6e6;">Name:</div>
<div class="a" style="left:620px;top:438px;width:233px;height:24px;background:#333333;"></div>
<div class="a" style="left:620px;top:467px;width:233px;height:24px;background:#333333;"></div>
<div class="a" style="left:620px;top:496px;width:233px;height:24px;background:#333333;"></div>
<div class="a" style="left:978px;top:438px;width:233px;height:24px;background:#333333;"></div>
<div class="t" style="left:873px;top:443px;color:#e6e6e6;">Resource Pool:</div>
<div class="t" style="left:627px;top:443px;color:#dedede;">node-1</div>
<div class="t" style="left:627px;top:472px;color:#dedede;">103</div>
<div class="t" style="left:627px;top:501px;color:#dedede;">AD-DC</div>
<div class="a" style="left:621px;top:439px;width:1px;height:15px;background:#e0e0e0;"></div>
<div class="a" style="left:510px;top:865px;width:75px;height:24px;background:#a9a9a9;border:1px solid #d0d0d0;border-radius:3px;"></div>
<div class="t" style="left:543px;top:870px;color:#202020;font-size:12px;">Help</div>
<div class="t" style="left:1007px;top:870px;color:#e0e0e0;">Advanced</div>
<div class="a" style="left:1070px;top:871px;width:13px;height:13px;background:#212121;border:1px solid #8e8e8e;"></div>
<div class="a" style="left:1090px;top:865px;width:60px;height:24px;background:#174266;border-radius:3px;"></div>
<div class="t" style="left:1107px;top:870px;color:#8d9bab;font-size:12px;">Back</div>
<div class="a" style="left:1156px;top:865px;width:60px;height:24px;background:#0360a8;border-radius:3px;"></div>
<div class="t" style="left:1173.5px;top:870px;color:#f0f0f0;font-size:12px;">Next</div>

<svg class="ov" viewBox="0 0 1722 1251"><circle cx="1205" cy="373.8" r="7.6" fill="none" stroke="#2b9bd6" stroke-width="1.1"/><path stroke="#2b9bd6" stroke-width="1.1" d="M1201.3,370.1 L1208.7,377.5 M1208.7,370.1 L1201.3,377.5"/><path fill="none" stroke="#787878" stroke-width="1.3" d="M837.2,447.2 L841.1,451.4 L845,447.2"/><path fill="none" stroke="#787878" stroke-width="1.3" d="M1195.2,447.2 L1199.1,451.4 L1203,447.2"/><path fill="none" stroke="#787878" stroke-width="1.3" d="M837.2,476.4 L841.1,472.6 L845,476.4 M837.2,481.4 L841.1,485.6 L845,481.4"/><circle cx="530.2" cy="877" r="5.9" fill="#1e1e1e"/><path fill="none" stroke="#a9a9a9" stroke-width="1.6" d="M528.2,875.4 Q528.2,873.3 530.2,873.3 Q532.2,873.3 532.2,875.2 Q532.2,876.4 530.4,877.4 L530.4,878.4"/><rect x="529.5" y="879.4" width="1.8" height="1.6" fill="#a9a9a9"/></svg>
</body></html>
